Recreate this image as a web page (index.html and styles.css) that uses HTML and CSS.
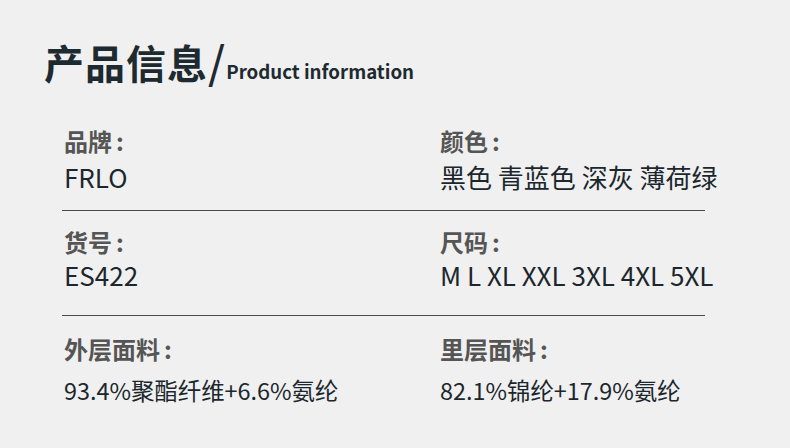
FILE: index.html
```html
<!DOCTYPE html>
<html lang="zh-CN">
<head>
<meta charset="utf-8">
<link rel="stylesheet" href="styles.css">
</head>
<body>
<div class="page">
  <h1 class="title"><span class="cn">产品信息</span><span class="slash">/</span><span class="en">Product information</span></h1>
  <div class="table">
    <div class="row row-first">
      <div class="cell"><div class="label">品牌<span class="colon">:</span></div><div class="value">FRLO</div></div>
      <div class="cell right"><div class="label">颜色<span class="colon">:</span></div><div class="value">黑色 青蓝色 深灰 薄荷绿</div></div>
    </div>
    <div class="row row-second">
      <div class="cell"><div class="label">货号<span class="colon">:</span></div><div class="value">ES422</div></div>
      <div class="cell right"><div class="label">尺码<span class="colon">:</span></div><div class="value">M L XL XXL 3XL 4XL 5XL</div></div>
    </div>
    <div class="row row-last">
      <div class="cell"><div class="label">外层面料<span class="colon">:</span></div><div class="value small">93.4%聚酯纤维+6.6%氨纶</div></div>
      <div class="cell right"><div class="label">里层面料<span class="colon">:</span></div><div class="value small">82.1%锦纶+17.9%氨纶</div></div>
    </div>
  </div>
</div>
</body>
</html>
```
FILE: styles.css
```css
html, body {
  margin: 0;
  padding: 0;
  background: #f0f0f0;
}
body {
  font-family: "Noto Sans CJK SC", "Noto Sans", sans-serif;
  color: #1d2a30;
}
.page {
  width: 790px;
  height: 448px;
  padding: 32px 0 0 44px;
  box-sizing: border-box;
  overflow: hidden;
}
.title {
  margin: 0;
  height: 60px;
  display: flex;
  align-items: baseline;
  font-weight: 700;
  color: #1d2a30;
  line-height: 56px;
  white-space: nowrap;
}
.title .cn {
  font-size: 40px;
  letter-spacing: 1px;
}
.title .slash {
  font-size: 44px;
  font-weight: 500;
  margin-left: 0;
  margin-right: 1px;
}
.title .en {
  font-size: 18.7px;
  font-weight: 700;
}
.table {
  margin-top: 33px;
  margin-left: 18px;
  width: 643px;
}
.row {
  display: flex;
  border-bottom: 1px solid #4a4a4a;
}
.row-first {
  padding-bottom: 16px;
  margin-bottom: 15px;
}
.row-first .value {
  padding-top: 3px;
}
.row-second {
  padding-bottom: 23px;
  margin-bottom: 17px;
}
.row-last {
  border-bottom: none;
}
.cell {
  flex: 0 0 374px;
  padding-left: 2px;
  white-space: nowrap;
}
.cell.right {
  flex: 1;
}
.label {
  font-size: 24px;
  font-weight: 700;
  color: #555555;
  line-height: 32px;
}
.colon {
  margin-left: 4px;
}
.value {
  font-size: 26px;
  line-height: 34px;
  color: #1b272d;
}
.value.small {
  font-size: 23.4px;
  line-height: 50px;
}
```
